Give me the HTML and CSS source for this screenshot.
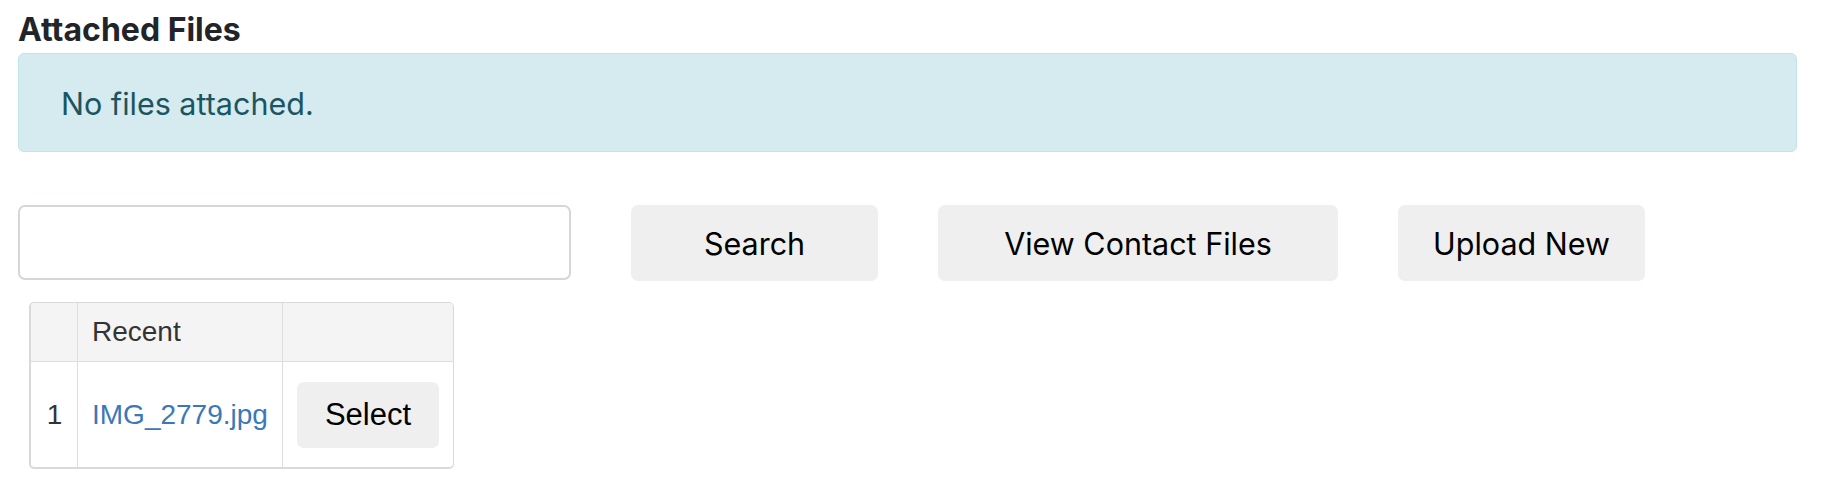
FILE: index.html
```html
<!DOCTYPE html>
<html lang="en">
<head>
<meta charset="utf-8">
<title>Attached Files</title>
<link rel="stylesheet" href="styles.css">
</head>
<body>
<div class="page">
  <h2 class="title">Attached Files</h2>
  <div class="alert">No files attached.</div>
  <div class="toolbar">
    <input class="search-input" type="text">
    <button class="btn btn-search">Search</button>
    <button class="btn btn-view">View Contact Files</button>
    <button class="btn btn-upload">Upload New</button>
  </div>
  <div class="recent">
    <div class="cell head num"></div>
    <div class="cell head name">Recent</div>
    <div class="cell head act"></div>
    <div class="cell body num">1</div>
    <div class="cell body name"><a class="file-link" href="#">IMG_2779.jpg</a></div>
    <div class="cell body act"><button class="select-btn">Select</button></div>
  </div>
</div>
</body>
</html>
```
FILE: styles.css
```css
* { box-sizing: border-box; }
html, body { margin: 0; padding: 0; background: #ffffff; }
.page {
  padding: 12px 27px 20px 18px;
  font-family: Inter, "Liberation Sans", sans-serif;
}
.title {
  margin: 0 0 5px 0;
  font-size: 32px;
  line-height: 36px;
  font-weight: 700;
  color: #212529;
}
.alert {
  height: 99px;
  padding: 2px 42px 0 42px;
  display: flex;
  align-items: center;
  background: #d5ebf0;
  border: 1px solid #c3e3ea;
  border-radius: 6px;
  color: #1b5561;
  font-size: 30.5px;
}
.toolbar {
  margin-top: 53px;
  display: flex;
  gap: 60px;
  align-items: stretch;
  height: 76px;
}
.search-input {
  width: 553px;
  height: 75px;
  border: 2px solid #d3d6da;
  border-radius: 7px;
  background: #fff;
  margin: 0;
  padding: 0 12px;
  font-size: 28px;
  outline: none;
}
.btn {
  height: 76px;
  border: none;
  border-radius: 7px;
  background: #efefef;
  color: #000;
  font-family: Inter, "Liberation Sans", sans-serif;
  font-size: 30.5px;
  padding: 0;
  margin: 0;
}
.btn-search { width: 247px; }
.btn-view { width: 400px; }
.btn-upload { width: 247px; }
.recent {
  margin: 21px 0 0 11px;
  width: 425px;
  display: grid;
  grid-template-columns: 47px 205px 170px;
  grid-template-rows: 59px 105px;
  border-style: solid;
  border-color: #d9d9d9;
  border-width: 1px 1px 2px 2px;
  border-radius: 5px;
  overflow: hidden;
  font-family: "Liberation Sans", Arial, sans-serif;
  font-size: 28px;
  color: #333;
}
.cell {
  display: flex;
  align-items: center;
}
.cell.num, .cell.name { border-right: 1px solid #dddddd; }
.cell.head {
  background: #f4f4f4;
  border-bottom: 1px solid #dddddd;
}
.cell.name { padding-left: 14px; }
.cell.num { justify-content: center; padding-left: 1px; }
.cell.act { padding-left: 14px; }
.file-link {
  color: #3a78b8;
  text-decoration: none;
}
.select-btn {
  width: 142px;
  height: 66px;
  border: none;
  border-radius: 7px;
  background: #efefef;
  color: #000;
  font-family: "Liberation Sans", Arial, sans-serif;
  font-size: 31px;
  padding: 0;
  margin: 0;
}
```
